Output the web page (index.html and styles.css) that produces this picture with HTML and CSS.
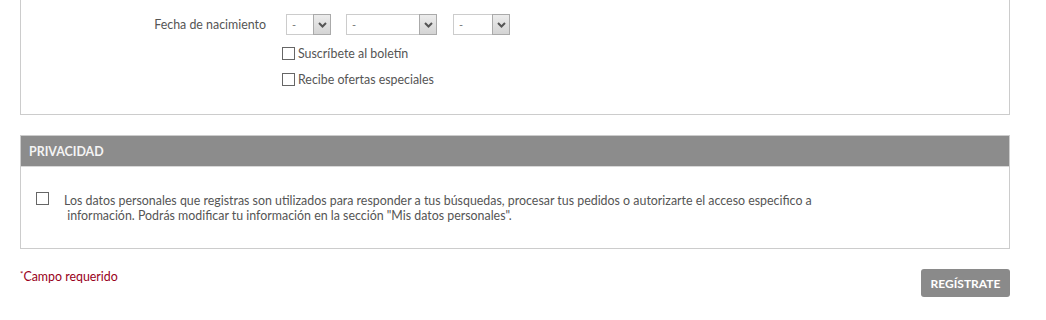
FILE: index.html
```html
<!DOCTYPE html>
<html lang="es">
<head>
  <meta charset="UTF-8" />
  <title>Registro</title>
  <link rel="stylesheet" href="styles.css">
</head>
<body>

<div class="page">
  <div class="panel panel-top">
    <div class="row">
      <label class="row-label">Fecha de nacimiento</label>
      <div class="date-fields">
        <div class="select-box day">
          <select><option>-</option></select>
          <span class="arrow"><svg width="9" height="6" viewBox="0 0 9 6"><path d="M1 1l3.5 3.5L8 1" fill="none" stroke="#555" stroke-width="2"/></svg></span>
        </div>
        <div class="select-box month">
          <select><option>-</option></select>
          <span class="arrow"><svg width="9" height="6" viewBox="0 0 9 6"><path d="M1 1l3.5 3.5L8 1" fill="none" stroke="#555" stroke-width="2"/></svg></span>
        </div>
        <div class="select-box year">
          <select><option>-</option></select>
          <span class="arrow"><svg width="9" height="6" viewBox="0 0 9 6"><path d="M1 1l3.5 3.5L8 1" fill="none" stroke="#555" stroke-width="2"/></svg></span>
        </div>
      </div>
    </div>
    <div class="checks">
      <label class="check"><span class="box"></span>Suscríbete al boletín</label>
      <label class="check"><span class="box"></span>Recibe ofertas especiales</label>
    </div>
  </div>

  <div class="panel panel-privacy">
    <div class="panel-head">PRIVACIDAD</div>
    <div class="panel-body">
      <span class="box"></span>
      <p class="privacy-text">Los datos personales que registras son utilizados para responder a tus búsquedas, procesar tus pedidos o autorizarte el acceso especifico a<br>&nbsp;información. Podrás modificar tu información en la sección "Mis datos personales".</p>
    </div>
  </div>

  <div class="footer">
    <span class="required"><sup>*</sup>Campo requerido</span>
    <button class="btn-submit">REGÍSTRATE</button>
  </div>
</div>

</body>
</html>
```

FILE: styles.css
```css
* {
  box-sizing: border-box;
}

body {
  margin: 0;
  font-family: 'Lato', 'Open Sans', sans-serif;
  font-size: 12.4px;
  color: #555;
  background: #fff;
}

.page {
  width: 990px;
  margin-left: 20px;
  margin-top: -10px;
}

.panel {
  border: 1px solid #ccc;
  background: #fff;
}

/* datos personales */
.panel-top {
  padding: 23px 0 27px;
}

.row {
  display: flex;
  align-items: center;
}

.row-label {
  width: 245px;
  text-align: right;
  margin-right: 20px;
}

.date-fields {
  display: flex;
  gap: 15px;
}

.select-box {
  position: relative;
  height: 21px;
}

.select-box.day { width: 45px; }
.select-box.month { width: 91px; }
.select-box.year { width: 57px; margin-left: 1px; }

.select-box select {
  appearance: none;
  -webkit-appearance: none;
  width: 100%;
  height: 100%;
  border: 1px solid #ccc;
  background: #fff;
  color: #777;
  font-family: inherit;
  font-size: 11px;
  padding: 0 0 0 5px;
  border-radius: 0;
}

.select-box .arrow {
  position: absolute;
  top: 0;
  right: 0;
  width: 18px;
  height: 21px;
  border: 1px solid #aaa;
  background: linear-gradient(#ececec, #d4d4d4);
  display: flex;
  align-items: center;
  justify-content: center;
}

.checks {
  margin-left: 261px;
  margin-top: 11px;
  display: flex;
  flex-direction: column;
  gap: 11px;
}

.check {
  display: flex;
  align-items: center;
  gap: 3px;
}

.box {
  display: inline-block;
  width: 13px;
  height: 13px;
  border: 1px solid #666;
  background: #fff;
  flex-shrink: 0;
}

/* privacidad */
.panel-privacy {
  margin-top: 20px;
}

.panel-head {
  background: #8c8c8c;
  color: #f4f4f4;
  font-weight: bold;
  padding: 0 8px;
  height: 31px;
  line-height: 31px;
  border-bottom: 1px solid #d8d8d8;
}

.panel-body {
  display: flex;
  align-items: flex-start;
  padding: 25px 15px 25px;
}

.privacy-text {
  margin: 1px 0 0 15px;
  line-height: 15px;
}

/* pie */
.footer {
  display: flex;
  justify-content: space-between;
  align-items: flex-start;
  margin-top: 20px;
}

.required {
  color: #990020;
  line-height: 16px;
  margin-top: 0;
}

.required sup {
  font-size: 8px;
  vertical-align: 4px;
  line-height: 0;
}

.btn-submit {
  background: #8a8a8a;
  color: #fff;
  border: none;
  border-radius: 3px;
  font-family: inherit;
  font-size: 12px;
  font-weight: bold;
  width: 89px;
  height: 28px;
  padding: 0;
}
```
